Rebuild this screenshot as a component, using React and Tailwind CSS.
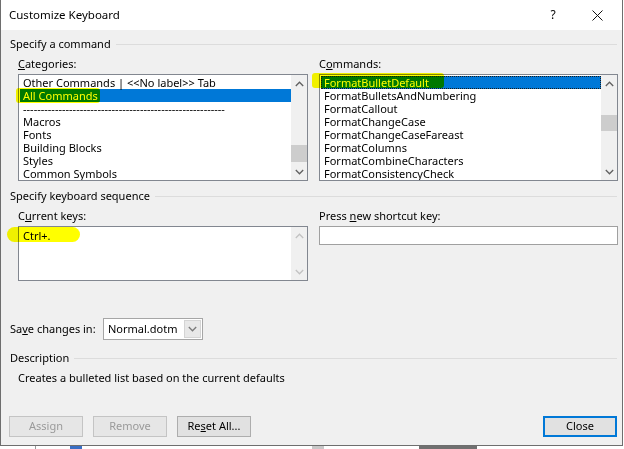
import React from 'react'

function Chevron({ up, color = '#606060' }) {
  return (
    <svg width="9" height="6" viewBox="0 0 9 6">
      <polyline
        points={up ? '0.8,5 4.5,1.2 8.2,5' : '0.8,1 4.5,4.8 8.2,1'}
        fill="none"
        stroke={color}
        strokeWidth="1.3"
      />
    </svg>
  )
}

function ScrollBar({ thumbTop, thumbHeight, disabled }) {
  const color = disabled ? '#c2c2c2' : '#606060'
  return (
    <div className="relative w-[16px] bg-[#f0f0f0] flex flex-col justify-between">
      <div className="h-[17px] flex items-center justify-center">
        <Chevron up color={color} />
      </div>
      <div className="h-[17px] flex items-center justify-center">
        <Chevron color={color} />
      </div>
      {!disabled && (
        <div className="absolute left-0 right-0 bg-[#cdcdcd]" style={{ top: thumbTop, height: thumbHeight }} />
      )}
    </div>
  )
}

function SectionHeader({ children, className = '' }) {
  return (
    <div className={`flex items-center gap-[5px] pl-[9px] pr-[5px] h-[16px] leading-[16px] ${className}`}>
      <span className="whitespace-nowrap">{children}</span>
      <div className="flex-1 border-t border-[#dcdcdc]" />
    </div>
  )
}

function Button({ children, disabled, primary, className = '' }) {
  const look = primary
    ? 'border-2 border-[#0078d7] bg-[#e1e1e1] text-black'
    : disabled
      ? 'border border-[#c4c4c4] bg-[#e6e6e6] text-[#9a9a9a]'
      : 'border border-[#adadad] bg-[#e1e1e1] text-black'
  return (
    <div className={`w-[74px] h-[21px] flex items-center justify-center ${look} ${className}`}>
      {children}
    </div>
  )
}

const categories = [
  'Other Commands | <<No label>> Tab',
  'All Commands',
  '-'.repeat(57),
  'Macros',
  'Fonts',
  'Building Blocks',
  'Styles',
  'Common Symbols',
]

const commands = [
  'FormatBulletDefault',
  'FormatBulletsAndNumbering',
  'FormatCallout',
  'FormatChangeCase',
  'FormatChangeCaseFareast',
  'FormatColumns',
  'FormatCombineCharacters',
  'FormatConsistencyCheck',
]

export default function App() {
  return (
    <div className="relative w-[624px] h-[449px] overflow-hidden bg-white text-black text-[11px] font-['Noto_Sans',sans-serif]">
      {/* Dialog */}
      <div className="w-[623px] h-[446px] border-l border-r border-b border-[#6e6e6e] flex flex-col">
        {/* Title bar */}
        <div className="h-[30px] bg-white flex items-center pl-[8px]">
          <span className="text-[11.5px] flex-1">Customize Keyboard</span>
          <span className="text-[12px] w-[12px] text-center mr-[33px]">?</span>
          <svg width="11" height="11" viewBox="0 0 11 11" className="mr-[19px]">
            <path d="M0.5 0.5 L10.5 10.5 M10.5 0.5 L0.5 10.5" stroke="#111" strokeWidth="1" />
          </svg>
        </div>

        {/* Body */}
        <div className="flex-1 bg-[#f0f0f0] pt-[6px]">
          <SectionHeader>Specify a command</SectionHeader>

          <div className="flex mt-[4px] pl-[17px]">
            <div className="w-[290px]">
              <div className="h-[16px] leading-[16px]"><u>C</u>ategories:</div>
              <div className="mt-[2px] w-[290px] h-[107px] border border-[#828790] bg-white flex">
                <div className="flex-1 pt-[1px] pl-[1px] overflow-hidden">
                  {categories.map((c, i) => (
                    <div
                      key={i}
                      className={`h-[13px] leading-[13px] pl-[3px] whitespace-nowrap ${i === 1 ? 'bg-[#0078d7] text-white' : ''}`}
                    >
                      {c}
                    </div>
                  ))}
                </div>
                <ScrollBar thumbTop={70} thumbHeight={17} />
              </div>
            </div>

            <div className="w-[299px] ml-[11px]">
              <div className="h-[16px] leading-[16px]">C<u>o</u>mmands:</div>
              <div className="mt-[2px] w-[299px] h-[107px] border border-[#828790] bg-white flex">
                <div className="flex-1 pt-[1px] pl-[1px] overflow-hidden">
                  {commands.map((c, i) => (
                    <div
                      key={c}
                      className={`h-[13px] leading-[13px] pl-[3px] whitespace-nowrap ${i === 0 ? 'bg-[#0078d7] text-white outline outline-1 outline-dotted outline-[#1a1a1a] -outline-offset-1' : ''}`}
                    >
                      {c}
                    </div>
                  ))}
                </div>
                <ScrollBar thumbTop={40} thumbHeight={16} />
              </div>
            </div>
          </div>

          <SectionHeader className="mt-[7px]">Specify keyboard sequence</SectionHeader>

          <div className="flex mt-[4px] pl-[17px]">
            <div className="w-[290px]">
              <div className="h-[16px] leading-[16px]">C<u>u</u>rrent keys:</div>
              <div className="mt-[2px] w-[290px] h-[55px] border border-[#828790] bg-white flex">
                <div className="flex-1 pt-[2px] pl-[1px]">
                  <div className="h-[13px] leading-[13px] pl-[3px]">Ctrl+.</div>
                </div>
                <ScrollBar disabled />
              </div>
            </div>

            <div className="w-[299px] ml-[11px]">
              <div className="h-[16px] leading-[16px]">Press <u>n</u>ew shortcut key:</div>
              <div className="mt-[2px] w-[299px] h-[19px] border border-[#a0a0a0] bg-white" />
            </div>
          </div>

          <div className="flex items-center mt-[37px] pl-[9px] h-[22px]">
            <span className="w-[93px]">Sa<u>v</u>e changes in:</span>
            <div className="flex w-[100px] h-[22px] border border-[#a6a6a6] bg-white">
              <span className="flex-1 pl-[4px] leading-[20px]">Normal.dotm</span>
              <div className="w-[17px] my-[1px] mr-[1px] bg-[#e8e8e8] border border-[#d4d4d4] flex items-center justify-center">
                <Chevron color="#7a7a7a" />
              </div>
            </div>
          </div>

          <SectionHeader className="mt-[10px]">Description</SectionHeader>

          <div className="mt-[4px] pl-[17px] h-[16px] leading-[16px]">
            Creates a bulleted list based on the current defaults
          </div>

          <div className="flex mt-[30px] pl-[8px]">
            <Button disabled>Assign</Button>
            <Button disabled className="ml-[10px]">Remove</Button>
            <Button className="ml-[10px]">Re<u>s</u>et All...</Button>
            <Button primary className="ml-[292px]">Close</Button>
          </div>
        </div>
      </div>

      {/* Window behind the dialog */}
      <div className="h-[3px] flex bg-white">
        <div className="w-[35px]" />
        <div className="w-[1px] bg-[#9a9a9a]" />
        <div className="w-[34px]" />
        <div className="w-[12px] bg-[#3a6fc4]" />
        <div className="w-[230px]" />
        <div className="w-[12px] bg-[#c8c8c8]" />
        <div className="w-[95px]" />
        <div className="w-[58px] bg-[#707070]" />
      </div>

      {/* Marker highlights */}
      <span className="absolute left-[16px] top-[88px] w-[84px] h-[15px] rounded-[3px] bg-[#ffff00] mix-blend-multiply" />
      <span className="absolute left-[312px] top-[73px] w-[132px] h-[15px] rounded-[3px] bg-[#ffff00] mix-blend-multiply" />
      <span className="absolute left-[7px] top-[227px] w-[73px] h-[15px] rounded-full bg-[#ffff00] mix-blend-multiply" />
    </div>
  )
}
